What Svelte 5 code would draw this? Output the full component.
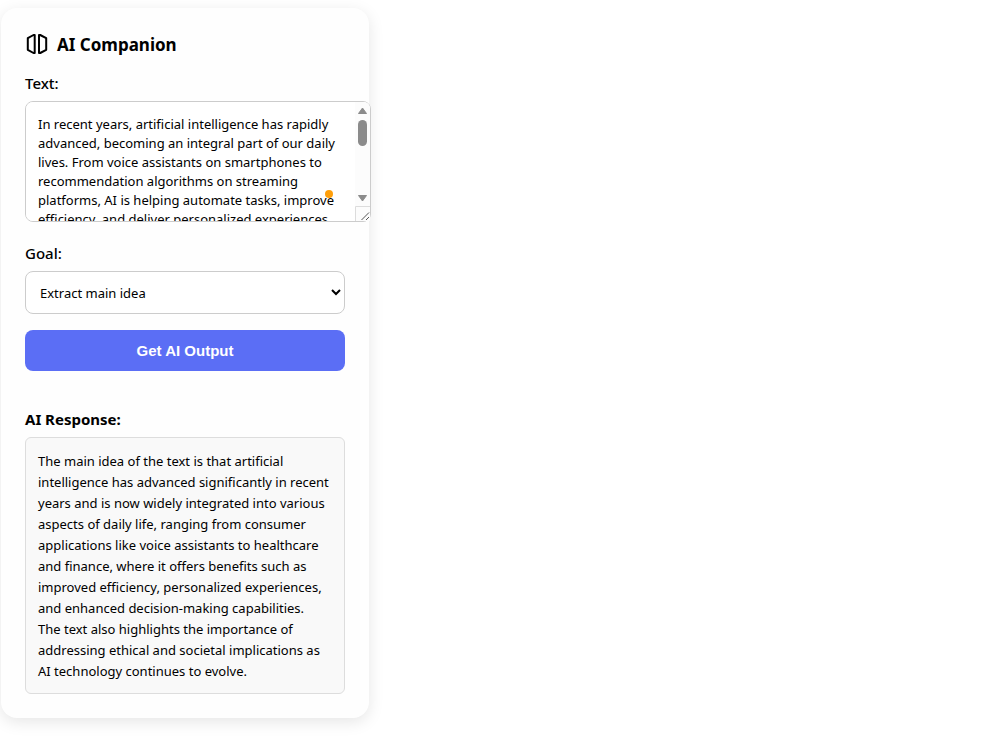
<script>
  let text = $state(
    "In recent years, artificial intelligence has rapidly advanced, becoming an integral part of our daily lives. From voice assistants on smartphones to recommendation algorithms on streaming platforms, AI is helping automate tasks, improve efficiency, and deliver personalized experiences across industries. In healthcare and finance, it supports faster and better decisions. As the technology continues to evolve, it is important to address its ethical and societal implications. Collaboration between researchers, companies and governments will help to shape how AI is used, and make sure that its benefits are shared widely. Education and open discussion remain just as important, so that people understand both what these systems can do and where their limits are. Privacy, fairness and transparency should be considered from the start."
  );
  let goal = $state("main-idea");

  const goals = [
    { value: "main-idea", label: "Extract main idea" },
    { value: "summarize", label: "Summarize" },
    { value: "explain", label: "Explain simply" },
  ];

  const response =
    "The main idea of the text is that artificial intelligence has advanced significantly in recent years and is now widely integrated into various aspects of daily life, ranging from consumer applications like voice assistants to healthcare and finance, where it offers benefits such as improved efficiency, personalized experiences, and enhanced decision-making capabilities.\nThe text also highlights the importance of addressing ethical and societal implications as AI technology continues to evolve.";
</script>

<main class="card">
  <h1 class="title">
    <svg class="logo" viewBox="0 0 24 24" aria-hidden="true">
      <path d="M9.700 2v18H8.500L2.800 16.800V5.200L8.500 2z" />
      <path d="M14 2v18h1.200l6-3.200V5.200l-6-3.200z" />
    </svg>
    AI Companion
  </h1>

  <label class="label" for="text">Text:</label>
  <div class="text-wrap">
    <textarea id="text" spellcheck="false" bind:value={text}></textarea>
    <svg class="scrollbar" viewBox="0 0 15 119" aria-hidden="true">
      <path class="track" d="M0 0h9a6 6 0 0 1 6 6v113H0z" />
      <path class="thumb arrow" d="M7.500 6L11.500 11.500h-8zM3.500 93.500h8L7.500 99z" />
      <rect class="thumb" x="3" y="18" width="9" height="26" rx="4.500" />
      <path class="corner" d="M.5 119V104.500H15" />
      <path class="grip" d="M6.500 118l7.500-7.500M11 118l3-3" />
    </svg>
    <span class="status-dot"></span>
  </div>

  <label class="label" for="goal">Goal:</label>
  <select id="goal" bind:value={goal}>
    {#each goals as item}
      <option value={item.value}>{item.label}</option>
    {/each}
  </select>

  <button class="submit" type="button">Get AI Output</button>

  <h2 class="label response-title">AI Response:</h2>
  <div class="response">{response}</div>
</main>

<style>
  :global(body) {
    min-height: 100vh;
    background: #fff;
  }

  :global(#app) {
    display: flow-root;
    padding-bottom: 16px;
  }

  .card {
    box-sizing: border-box;
    width: 100%;
    max-width: 368px;
    margin: 8px 1px;
    padding: 24px;
    border-radius: 16px;
    background: #fefefe;
    box-shadow: 0 4px 16px rgba(0, 0, 0, 0.1);
    color: #000;
    font-family: "Segoe UI", "Noto Sans", sans-serif;
    font-size: 13px;
  }

  .title {
    display: flex;
    align-items: center;
    gap: 8px;
    margin: 0 0 14px;
    font-size: 17px;
    font-weight: 700;
    line-height: 26px;
  }

  .logo {
    width: 24px;
    height: 24px;
    fill: none;
    stroke: #000;
    stroke-width: 2;
    stroke-linejoin: round;
  }

  .label {
    display: block;
    margin: 0 0 7px;
    font-size: 15px;
    font-weight: 500;
    line-height: 22px;
  }

  .text-wrap {
    position: relative;
    width: calc(100% + 26px);
    margin-bottom: 20px;
  }

  textarea {
    display: block;
    box-sizing: border-box;
    width: 100%;
    height: 121px;
    padding: 13px 27px 11px 12px;
    border: 1px solid #ccc;
    border-radius: 8px;
    background: #fff;
    color: #000;
    font-family: inherit;
    font-size: 13px;
    line-height: 19px;
    resize: none;
    overflow-y: scroll;
    scrollbar-width: none;
  }

  .scrollbar {
    position: absolute;
    top: 1px;
    right: 1px;
    width: 15px;
    height: 119px;
    pointer-events: none;
  }

  .track {
    fill: #fcfcfc;
  }

  .thumb {
    fill: #8b8b8b;
  }

  .arrow {
    stroke: #8b8b8b;
    stroke-linejoin: round;
  }

  .corner {
    fill: none;
    stroke: #dcdcdc;
  }

  .grip {
    fill: none;
    stroke: #555;
  }

  .status-dot {
    position: absolute;
    right: 38px;
    bottom: 24px;
    width: 8px;
    height: 8px;
    border-radius: 50%;
    background: #ff9f0a;
  }

  select {
    width: 100%;
    height: 43px;
    margin: 0 0 16px;
    padding: 0 10px;
    border: 1px solid #ccc;
    border-radius: 8px;
    background: #fff;
    color: #000;
    font-family: inherit;
    font-size: 13px;
  }

  .submit {
    display: block;
    width: 100%;
    height: 41px;
    padding: 0;
    border: none;
    border-radius: 8px;
    background: #5b6ef5;
    color: #fff;
    font-family: "Liberation Sans", Arial, sans-serif;
    font-size: 15px;
    font-weight: 600;
    cursor: pointer;
  }

  .response-title {
    margin-top: 37px;
    font-weight: 700;
  }

  .response {
    padding: 13px 12px 11px;
    border: 1px solid #ddd;
    border-radius: 6px;
    background: #f9f9f9;
    line-height: 21px;
    white-space: pre-line;
  }
</style>
